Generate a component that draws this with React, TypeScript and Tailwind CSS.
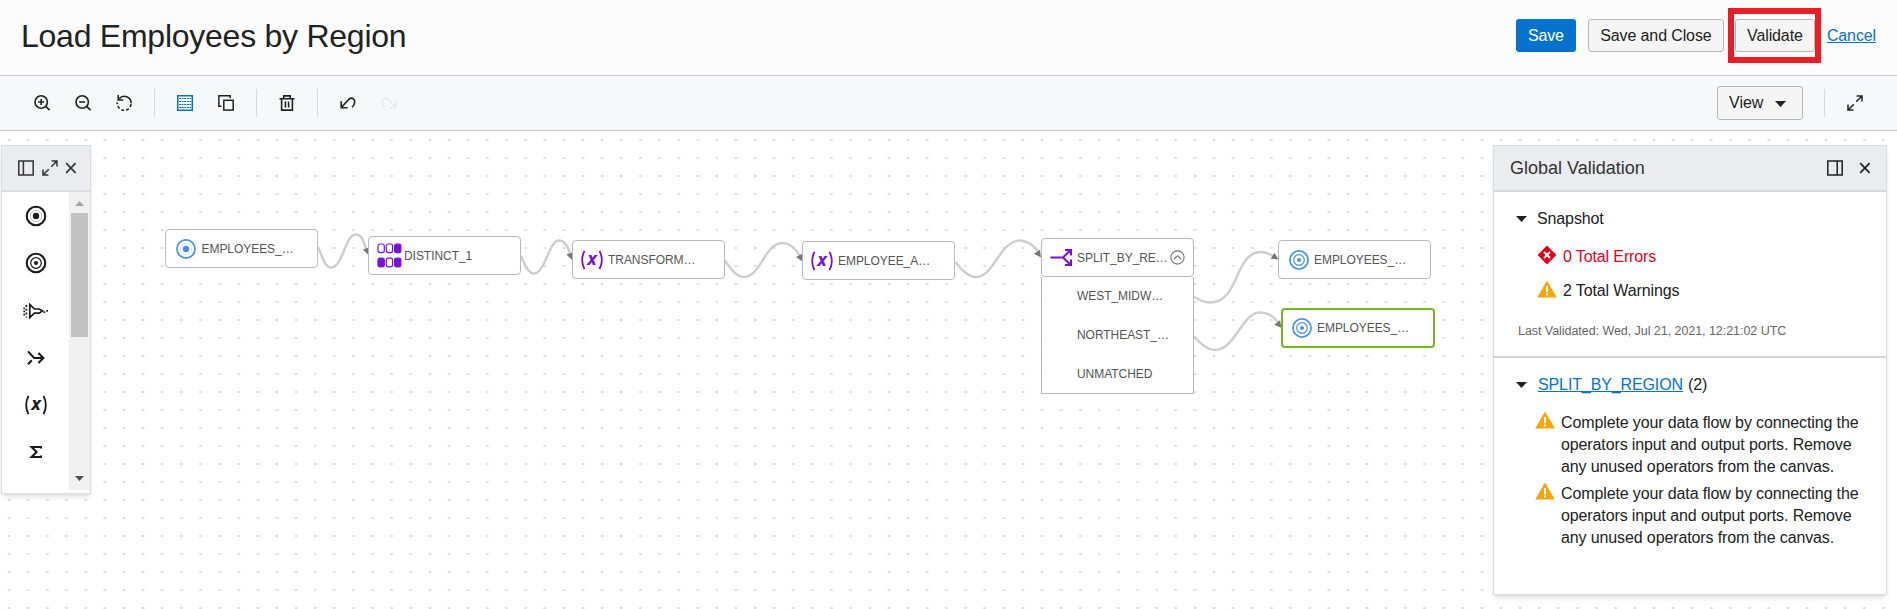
import React from "react";

type IconProps = { className?: string };

const strokeProps = { fill: "none", stroke: "currentColor" } as const;

const ZoomIcon = ({ plus }: { plus?: boolean }) => (
  <svg width="18" height="18" viewBox="0 0 18 18" {...strokeProps} strokeWidth="1.6">
    <circle cx="8.2" cy="8" r="6.2" />
    <path d="M12.6 12.4 16.6 16.2" />
    <path d={plus ? "M5.2 8h6M8.2 5v6" : "M5.2 8h6"} />
  </svg>
);

const ResetIcon = () => (
  <svg width="18" height="18" viewBox="0 0 18 18" {...strokeProps} strokeWidth="1.6">
    <path d="M4.2 4.6A6.9 6.9 0 0 1 16.2 9.2" />
    <path d="M16.1 10.2A6.9 6.9 0 0 1 2.3 8.4" strokeDasharray="3 2" />
    <path d="M3.2 1v5h5" />
  </svg>
);

const GridIcon = () => (
  <svg width="16" height="16" viewBox="0 0 16 16">
    <rect x="0.75" y="0.75" width="14.5" height="14.5" fill="#fff" stroke="#0572ce" strokeWidth="1.5" />
    <path d="M2 3.5h12M2 6.5h12M2 9.5h12M2 12.5h12" stroke="#0572ce" strokeWidth="1" strokeDasharray="2 0.6" />
  </svg>
);

const CopyIcon = () => (
  <svg width="16" height="16" viewBox="0 0 16 16" {...strokeProps} strokeWidth="1.5">
    <path d="M3.5 11.2H.9V.8h11.3V3" />
    <rect x="5.8" y="5.3" width="9.4" height="9.8" />
  </svg>
);

const TrashIcon = () => (
  <svg width="16" height="16" viewBox="0 0 16 16" {...strokeProps} strokeWidth="1.6">
    <path d="M.5 3.8h15M4.8 3.8V.9h6.4v2.9M2.6 3.8v11.3h10.8V3.8M6.4 6.4v6M9.6 6.4v6" />
  </svg>
);

const UndoIcon = () => (
  <svg width="16" height="12" viewBox="0 0 16 12" {...strokeProps} strokeWidth="1.6">
    <path d="M1.4 10.4 8 3.2C9.4 1.5 11.6.5 13.4 1.9 15.6 3.7 14.9 7 12.2 10.2" />
    <path d="M1.2 4.2v6.5h6.4" />
  </svg>
);

const ExpandIcon = ({ className }: IconProps) => (
  <svg width="16" height="16" viewBox="0 0 16 16" {...strokeProps} strokeWidth="1.5" className={className}>
    <path d="M9.6 1h5.4v5.4M15 1 9.2 6.8M1 9.6V15h5.4M1 15l5.8-5.8" />
  </svg>
);

const DockIcon = ({ right }: { right?: boolean }) => (
  <svg width="16" height="16" viewBox="0 0 16 16" {...strokeProps} strokeWidth="1.5">
    <rect x="0.8" y="1" width="14.4" height="14" />
    <path d={right ? "M10.2 1v14" : "M5.4 1v14"} />
  </svg>
);

const CloseIcon = () => (
  <svg width="12" height="12" viewBox="0 0 12 12" {...strokeProps} strokeWidth="1.7">
    <path d="M1.2 1.2l9.4 9.6M10.6 1.2 1.2 10.8" />
  </svg>
);

const Caret = ({ className }: IconProps) => (
  <svg width="11" height="6" viewBox="0 0 11 6" className={className}>
    <path d="M0 0h11L5.5 6z" fill="currentColor" />
  </svg>
);

const SourceIcon = ({ className, ring = 1.7 }: IconProps & { ring?: number }) => (
  <svg width="22" height="22" viewBox="0 0 22 22" {...strokeProps} className={className}>
    <circle cx="11" cy="11" r={8.2 + ring / 2} strokeWidth={ring} />
    <circle cx="11" cy="11" r="5.6" strokeWidth="0.5" strokeOpacity="0.5" />
    <circle cx="11" cy="11" r="3.2" fill="currentColor" stroke="none" />
  </svg>
);

const TargetIcon = ({ className, ring = 1.7 }: IconProps & { ring?: number }) => (
  <svg width="22" height="22" viewBox="0 0 22 22" {...strokeProps} className={className}>
    <circle cx="11" cy="11" r={8.2 + ring / 2} strokeWidth={ring} />
    <circle cx="11" cy="11" r="5.3" strokeWidth="1.2" />
    <circle cx="11" cy="11" r="2" fill="currentColor" stroke="none" />
  </svg>
);

const FilterIcon = () => (
  <svg width="26" height="16" viewBox="0 0 26 16" {...strokeProps} strokeWidth="1.7">
    <path d="M6.8 1.4v13.2l4.6-4.4h4.8l3.4-2.4-3.4-1.8h-4.8z" />
    <path d="M3.4 2v12.5" strokeDasharray="2 1.8" />
    <path d="M1.2 4.4v8" strokeDasharray="1.6 1.6" />
    <path d="M20.5 9.2h1.6M23.4 7.9h1.6" />
  </svg>
);

const JoinIcon = () => (
  <svg width="18" height="16" viewBox="0 0 18 16" {...strokeProps} strokeWidth="2">
    <path d="M1 1.4 7.2 8H16M1 14.2l3.8-4M11.4 3l5 5-5 5" />
  </svg>
);

const ExprIcon = ({ className = "" }: IconProps) => (
  <svg width="24" height="22" viewBox="0 0 24 22" className={`overflow-visible ${className}`}>
    <path d="M4.5 1.8Q-.2 11 4.5 20.2M19.5 1.8Q24.2 11 19.5 20.2" {...strokeProps} strokeWidth="1.8" />
    <text x="12" y="15.6" textAnchor="middle" fill="currentColor" fontFamily="'Open Sans', sans-serif" fontWeight="700" fontStyle="italic" fontSize="18">
      x
    </text>
  </svg>
);

const SigmaIcon = () => (
  <svg width="14" height="14" viewBox="0 0 14 14" {...strokeProps} strokeWidth="2.1">
    <path d="M12 3.6V2H2.6l5 5-5 5H12v-1.6" />
  </svg>
);

const DistinctIcon = () => (
  <svg width="25" height="25" viewBox="0 0 25 25" fill="none" stroke="#7a10d6" strokeWidth="1.2">
    {[0, 1].map((r) =>
      [0, 1, 2].map((c) => (
        <rect
          key={`${r}-${c}`}
          x={1 + c * 8.3}
          y={1 + r * 14.2}
          width="6.3"
          height="8.6"
          rx="2"
          fill={(r === 0 && c === 2) || (r === 1 && c !== 1) ? "#7a10d6" : "#fff"}
        />
      )),
    )}
  </svg>
);

const SplitIcon = () => (
  <svg width="23" height="19" viewBox="0 0 23 19" fill="none" stroke="#7a10d6" strokeWidth="2.1">
    <path d="M.5 9.5H13M20.6 2l-7.6 7.5 7.6 7.5M15 2h6v5.4M15 17h6v-5.4" />
  </svg>
);

const ErrorIcon = () => (
  <svg width="20" height="20" viewBox="0 0 20 20">
    <path d="M10 .6 19.4 10 10 19.4.6 10z" fill="#e3001b" />
    <path d="M7 7l6 6M13 7l-6 6" stroke="#fff" strokeWidth="2" />
  </svg>
);

const WarningIcon = ({ className }: IconProps) => (
  <svg width="20" height="18" viewBox="0 0 20 18" className={className}>
    <path d="M10 .4 19.8 17.4H.2z" fill="#f7a50a" />
    <path d="M10 6v6.2M10 13.6v2" stroke="#fff" strokeWidth="2" />
  </svg>
);

const ToolButton = ({ label, className, children }: { label: string; className: string; children: React.ReactNode }) => (
  <button aria-label={label} className={`flex h-8 items-center justify-center ${className}`}>
    {children}
  </button>
);

const Divider = ({ className = "" }: IconProps) => <div className={`h-7 w-px bg-[#d3dae2] ${className}`} />;

function Header() {
  return (
    <header className="flex h-[76px] shrink-0 items-start justify-between border-b border-[#c9cacc] bg-[#fcfcfc] pr-[21px] pl-[21px]">
      <h1 className="mt-[15px] text-[32px] leading-[42px] tracking-[-0.25px] whitespace-nowrap text-[#222]">Load Employees by Region</h1>
      <div className="flex items-start text-base leading-[31px] tracking-[-0.12px] text-[#222]">
        <button className="mt-[19px] h-[33px] w-[60px] rounded-[3px] bg-[#0572ce] text-white">Save</button>
        <button className="mt-[19px] ml-3 h-[33px] w-[136px] rounded-[3px] border border-[#b4b8be] bg-[#f5f5f5]">
          Save and Close
        </button>
        <div className="mt-2 ml-1 flex h-[55px] w-[93px] items-center border-[6px] border-[#ed1c24] pl-px">
          <button className="h-[33px] w-20 rounded-[3px] border border-[#b4b8be] bg-[#f5f5f5]">Validate</button>
        </div>
        <a className="mt-5 ml-1.5 text-[#0572ce] underline">Cancel</a>
      </div>
    </header>
  );
}

function Toolbar() {
  return (
    <div className="flex h-[55px] shrink-0 items-center border-b border-[#c9cacc] bg-[#f7f8fa] pr-[34px] pl-[22px] text-[#222]">
      <ToolButton label="Zoom in" className="w-10"><ZoomIcon plus /></ToolButton>
      <ToolButton label="Zoom out" className="w-[42px]"><ZoomIcon /></ToolButton>
      <ToolButton label="Reset zoom" className="w-10"><ResetIcon /></ToolButton>
      <Divider className="ml-[10px]" />
      <ToolButton label="Grid guides" className="ml-[10px] w-10"><GridIcon /></ToolButton>
      <ToolButton label="Auto layout" className="ml-px w-10"><CopyIcon /></ToolButton>
      <Divider className="ml-[10px]" />
      <ToolButton label="Delete" className="ml-[10px] w-10"><TrashIcon /></ToolButton>
      <Divider className="ml-[10px]" />
      <ToolButton label="Undo" className="ml-[10px] w-10"><UndoIcon /></ToolButton>
      <ToolButton label="Redo" className="ml-px w-10 -scale-x-100 text-[#e7e9ec]"><UndoIcon /></ToolButton>
      <div className="ml-auto flex items-center">
        <button className="flex h-[34px] w-[86px] items-center rounded-[3px] border border-[#b4b8be] bg-[#f5f5f5] pl-[11px] text-base leading-8">
          View
          <Caret className="mt-0.5 ml-3" />
        </button>
        <Divider className="ml-[21px]" />
        <ExpandIcon className="ml-[22px]" />
      </div>
    </div>
  );
}

function Palette() {
  return (
    <aside className="relative mt-[14px] flex h-[349px] w-[90px] flex-col border border-[#dcdde0] bg-white text-[#1a1a1a] shadow-md">
      <div className="flex h-[46px] shrink-0 items-center border-b-2 border-[#dddee2] bg-[#ebecf0] pl-4 text-[#333]">
        <DockIcon />
        <ExpandIcon className="ml-2" />
        <span className="ml-[7px]"><CloseIcon /></span>
      </div>
      <div className="flex min-h-0 flex-1 pb-[3px]">
        <div className="flex w-[67px] flex-col items-center">
          <div className="flex h-[47px] items-center"><SourceIcon ring={2.1} /></div>
          <div className="flex h-[48px] items-center"><TargetIcon ring={2.1} /></div>
          <div className="flex h-[47px] items-center"><FilterIcon /></div>
          <div className="flex h-[48px] items-center"><JoinIcon /></div>
          <div className="flex h-[46px] items-center"><ExprIcon /></div>
          <div className="flex h-[48px] items-center"><SigmaIcon /></div>
        </div>
        <div className="flex flex-1 flex-col items-center bg-[#f0f0f0] pb-[9px]">
          <Caret className="mt-[9px] h-[5px] w-[9px] rotate-180 text-[#a3a3a3]" />
          <div className="mt-[7px] h-[124px] w-[17px] bg-[#c1c1c1]" />
          <Caret className="mt-auto h-[5px] w-[9px] text-[#505050]" />
        </div>
      </div>
    </aside>
  );
}

const WARNING = "Complete your data flow by connecting the operators input and output ports. Remove any unused operators from the canvas.";

function ValidationPanel() {
  return (
    <aside className="relative mt-[14px] flex h-[450px] w-[394px] flex-col border border-[#dcdde0] bg-white text-base tracking-[-0.12px] text-[#222] shadow-md">
      <div className="flex h-[46px] shrink-0 items-center border-b-2 border-[#d5d7db] bg-[#ebecf0] pr-[15px] pl-4">
        <h2 className="text-[18px] leading-6 tracking-normal text-[#333]">Global Validation</h2>
        <span className="ml-auto"><DockIcon right /></span>
        <span className="ml-4"><CloseIcon /></span>
      </div>
      <section className="h-[166px] shrink-0 border-b-2 border-[#d5d7db] pl-[22px]">
        <div className="flex items-center pt-[15px] leading-6">
          <Caret />
          <span className="ml-[10px]">Snapshot</span>
        </div>
        <div className="mt-[14px] flex items-center pl-[21px] leading-6 text-[#e3001b]">
          <span className="-mt-1"><ErrorIcon /></span>
          <span className="ml-1.5">0 Total Errors</span>
        </div>
        <div className="mt-[10px] flex items-center pl-[21px] leading-6">
          <WarningIcon className="-mt-1" />
          <span className="ml-1.5">2 Total Warnings</span>
        </div>
        <p className="mt-[18px] pl-[2px] text-[12.5px] leading-5 tracking-[-0.05px] text-[#666]">Last Validated: Wed, Jul 21, 2021, 12:21:02 UTC</p>
      </section>
      <section className="pl-[22px]">
        <div className="flex items-center pt-[15px] leading-6">
          <Caret />
          <a className="ml-[11px] text-[#0572ce] underline">SPLIT_BY_REGION</a>
          <span className="ml-[5px]">(2)</span>
        </div>
        <div className="mt-[15px] flex flex-col gap-[5px] pl-[19px]">
          {[0, 1].map((i) => (
            <div key={i} className="flex items-start">
              <WarningIcon className="mt-[-1px] shrink-0" />
              <p className="ml-1.5 w-[305px] leading-[22px]">{WARNING}</p>
            </div>
          ))}
        </div>
      </section>
    </aside>
  );
}

const EDGES = [
  "M318 247C324 262 326 267.5 331 267.5C343 267.5 345 234.5 356 234.5C362 234.5 364 242 367 252",
  "M521 256C526 268 529 273.5 534 273.5C545 273.5 549 240.5 559 240.5C565 240.5 568 246 570.5 255",
  "M725 260.5C732 271 737 277 744 277C761 277 764 243 783 243C791 243 796 249 800.5 257",
  "M955.5 262C963 272 969 277 976 277C994 277 1000 240.5 1020 240.5C1028 240.5 1033 245 1038 251",
  "M1194 297C1200 300.5 1205 302.5 1210 302.5C1240 302.5 1234 252 1261 252C1267 252 1270 254 1275 257",
  "M1194 336C1201 345 1207 350 1215 350C1235 350 1242 312.5 1260 312.5C1268 312.5 1273 316 1279 323",
];

const ARROWS: [number, number, number][] = [
  [368.5, 255, 72],
  [572, 260, 72],
  [802.5, 261.5, 62],
  [1041, 257.5, 55],
  [1278.5, 259.5, 32],
  [1281.5, 328, 52],
];

function CanvasArt() {
  return (
    <svg className="absolute inset-0" width="1897" height="478" viewBox="0 131 1897 478">
      <defs>
        <pattern id="dots" x="-0.4" y="131" width="19.125" height="18" patternUnits="userSpaceOnUse">
          <rect x="8.3" y="8" width="2.6" height="2" fill="#dcdcdc" />
        </pattern>
      </defs>
      <rect y="131" width="1897" height="478" fill="url(#dots)" />
      {EDGES.map((d) => (
        <path key={d} d={d} fill="none" stroke="#cecece" strokeWidth="2.4" />
      ))}
      {ARROWS.map(([x, y, a]) => (
        <path key={x} d="M0 0-7-3.6-7 3.6z" fill="#777" transform={`translate(${x} ${y}) rotate(${a})`} />
      ))}
    </svg>
  );
}

type NodeProps = { place: string; icon: React.ReactNode; label: string; iconBox: string; border?: string; children?: React.ReactNode };

const FlowNode = ({ place, icon, label, iconBox, border = "h-[39px] w-[153px] border border-[#b9b9b9]", children }: NodeProps) => (
  <div className={`absolute flex items-center rounded-[4px] bg-white text-[12px] tracking-[-0.05px] text-[#555] ${border} ${place}`}>
    <span className={`flex shrink-0 items-center ${iconBox}`}>{icon}</span>
    <span className="whitespace-nowrap">{label}</span>
    {children}
  </div>
);

function Flow() {
  return (
    <div className="absolute inset-0">
      <CanvasArt />
      <FlowNode place="top-[98px] left-[165px]" icon={<SourceIcon className="text-[#4a90e2]" />} iconBox="w-[35.5px] pl-[9px]" label="EMPLOYEES_…" />
      <FlowNode place="top-[105px] left-[368px]" icon={<DistinctIcon />} iconBox="w-[35px] pl-[7.5px]" label="DISTINCT_1" />
      <FlowNode place="top-[109px] left-[572px]" icon={<ExprIcon className="text-[#7a10d6]" />} iconBox="w-[35px] pl-[7px]" label="TRANSFORM…" />
      <FlowNode place="top-[110px] left-[802px]" icon={<ExprIcon className="text-[#7a10d6]" />} iconBox="w-[35px] pl-[7px]" label="EMPLOYEE_A…" />
      <div className="absolute top-[146px] left-[1041px] flex h-[117px] w-[153px] flex-col border border-t-0 border-[#b9b9b9] bg-white pl-[35px] text-[12px] leading-[39px] tracking-[-0.05px] text-[#555]">
        <span>WEST_MIDW…</span>
        <span>NORTHEAST_…</span>
        <span>UNMATCHED</span>
      </div>
      <FlowNode place="top-[107px] left-[1041px]" icon={<SplitIcon />} iconBox="w-[35px] pl-[7.5px]" label="SPLIT_BY_RE…">
        <svg width="15" height="15" viewBox="0 0 15 15" fill="none" stroke="#777" strokeWidth="1.1" className="mr-[8.5px] ml-auto shrink-0">
          <circle cx="7.5" cy="7.5" r="6.6" />
          <path d="M4 9l3.5-3.2L11 9" />
        </svg>
      </FlowNode>
      <FlowNode place="top-[109px] left-[1278px]" icon={<TargetIcon className="text-[#4a90e2]" />} iconBox="w-[35px] pl-[9px]" label="EMPLOYEES_…" />
      <FlowNode place="top-[177px] left-[1281px]" border="h-[40px] w-[154px] border-2 border-[#77b81e]" icon={<TargetIcon className="text-[#4a90e2]" />} iconBox="w-[34px] pl-[8px]" label="EMPLOYEES_…" />
    </div>
  );
}

export default function App() {
  return (
    <div className="flex h-[609px] w-full flex-col overflow-hidden bg-white font-['Liberation_Sans',Arial,sans-serif]">
      <Header />
      <Toolbar />
      <main className="relative flex min-h-0 flex-1 items-start justify-between pr-[10px] pl-px">
        <Flow />
        <Palette />
        <ValidationPanel />
      </main>
    </div>
  );
}
